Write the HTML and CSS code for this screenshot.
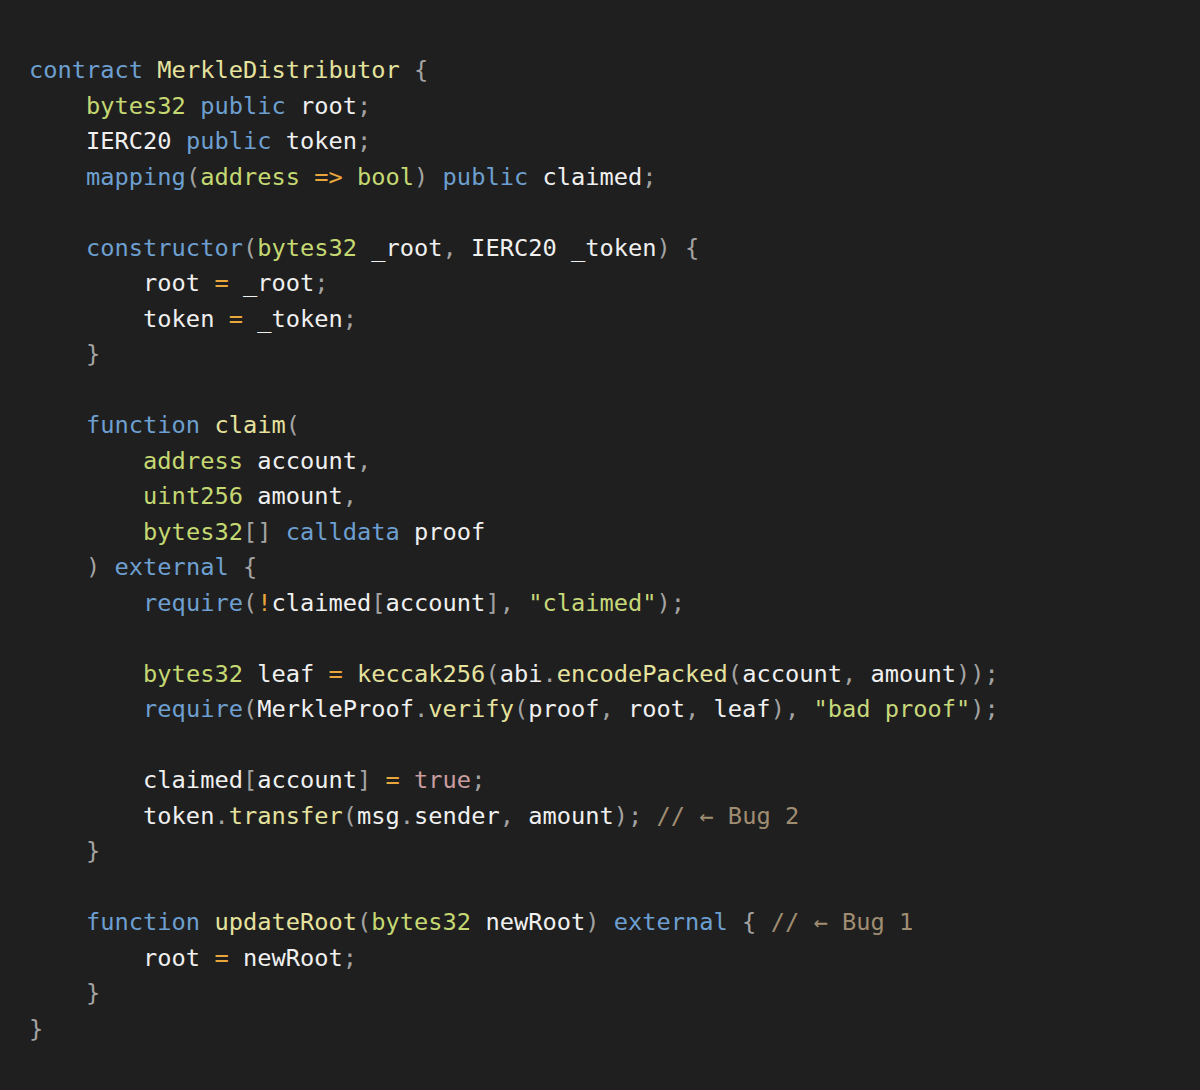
FILE: index.html
```html
<!DOCTYPE html>
<html>
<head>
<meta charset="utf-8">
<link rel="stylesheet" href="styles.css">
</head>
<body>
<pre class="code"><span class="k">contract</span> <span class="f">MerkleDistributor</span> <span class="p">{</span>
    <span class="t">bytes32</span> <span class="k">public</span> root<span class="p">;</span>
    IERC20 <span class="k">public</span> token<span class="p">;</span>
    <span class="k">mapping</span><span class="p">(</span><span class="t">address</span> <span class="o">=&gt;</span> <span class="t">bool</span><span class="p">)</span> <span class="k">public</span> claimed<span class="p">;</span>

    <span class="k">constructor</span><span class="p">(</span><span class="t">bytes32</span> _root<span class="p">,</span> IERC20 _token<span class="p">)</span> <span class="p">{</span>
        root <span class="o">=</span> _root<span class="p">;</span>
        token <span class="o">=</span> _token<span class="p">;</span>
    <span class="p">}</span>

    <span class="k">function</span> <span class="f">claim</span><span class="p">(</span>
        <span class="t">address</span> account<span class="p">,</span>
        <span class="t">uint256</span> amount<span class="p">,</span>
        <span class="t">bytes32</span><span class="p">[]</span> <span class="k">calldata</span> proof
    <span class="p">)</span> <span class="k">external</span> <span class="p">{</span>
        <span class="k">require</span><span class="p">(</span><span class="o">!</span>claimed<span class="p">[</span>account<span class="p">],</span> <span class="s">"claimed"</span><span class="p">);</span>

        <span class="t">bytes32</span> leaf <span class="o">=</span> <span class="f">keccak256</span><span class="p">(</span>abi<span class="p">.</span><span class="f">encodePacked</span><span class="p">(</span>account<span class="p">,</span> amount<span class="p">));</span>
        <span class="k">require</span><span class="p">(</span>MerkleProof<span class="p">.</span><span class="f">verify</span><span class="p">(</span>proof<span class="p">,</span> root<span class="p">,</span> leaf<span class="p">),</span> <span class="s">"bad proof"</span><span class="p">);</span>

        claimed<span class="p">[</span>account<span class="p">]</span> <span class="o">=</span> <span class="b">true</span><span class="p">;</span>
        token<span class="p">.</span><span class="f">transfer</span><span class="p">(</span>msg<span class="p">.</span>sender<span class="p">,</span> amount<span class="p">);</span> <span class="c">// ← Bug 2</span>
    <span class="p">}</span>

    <span class="k">function</span> <span class="f">updateRoot</span><span class="p">(</span><span class="t">bytes32</span> newRoot<span class="p">)</span> <span class="k">external</span> <span class="p">{</span> <span class="c">// ← Bug 1</span>
        root <span class="o">=</span> newRoot<span class="p">;</span>
    <span class="p">}</span>
<span class="p">}</span></pre>
</body>
</html>
```

FILE: styles.css
```css
html, body {
  margin: 0;
  padding: 0;
  background: #1f1f1f;
}
body {
  width: 1200px;
  height: 1090px;
  overflow: hidden;
}
.code {
  margin: 0;
  padding: 53px 0 0 29px;
  font-family: "DejaVu Sans Mono", "Liberation Mono", monospace;
  font-size: 23.7px;
  line-height: 35.5px;
  color: #f0f0f0;
}
.k { color: #6d9fd0; }
.t { color: #c5d872; }
.f { color: #e5e29d; }
.o { color: #e8a63c; }
.p { color: #a3a3a3; }
.s { color: #c7d87b; }
.b { color: #c99da0; }
.c { color: #a08d72; }
```
